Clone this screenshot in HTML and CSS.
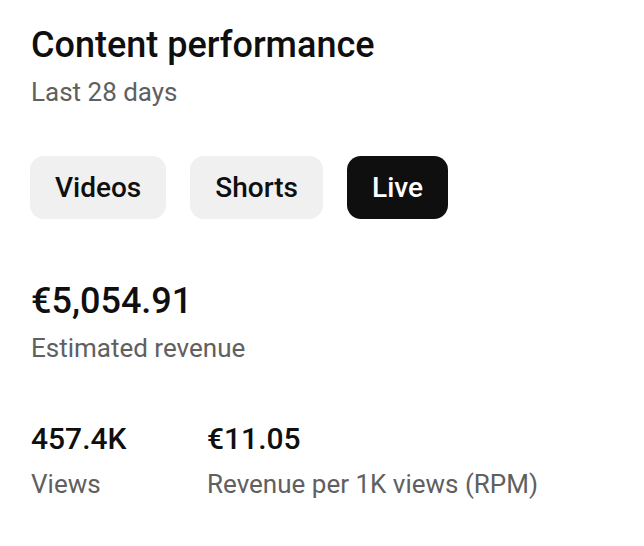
FILE: index.html
```html
<!DOCTYPE html>
<html lang="en">
<head>
  <meta charset="UTF-8">
  <meta name="viewport" content="width=device-width, initial-scale=1.0">
  <title>Content performance</title>
  <link rel="stylesheet" href="styles.css">
</head>
<body>
  <div class="panel">
    <h1 class="title">Content performance</h1>
    <div class="subtitle">Last 28 days</div>

    <div class="chips">
      <button class="chip">Videos</button>
      <button class="chip">Shorts</button>
      <button class="chip active">Live</button>
    </div>

    <div class="metric main">
      <div class="metric-value big">€5,054.91</div>
      <div class="metric-label">Estimated revenue</div>
    </div>

    <div class="metric-row">
      <div class="metric views">
        <div class="metric-value">457.4K</div>
        <div class="metric-label">Views</div>
      </div>
      <div class="metric">
        <div class="metric-value">€11.05</div>
        <div class="metric-label">Revenue per 1K views (RPM)</div>
      </div>
    </div>
  </div>
</body>
</html>
```

FILE: styles.css
```css
body {
  margin: 0;
  background: #ffffff;
  color: #0f0f0f;
  font-family: Roboto, "Noto Sans", sans-serif;
}

.panel {
  padding: 23px 31px 0 31px;
}

.title {
  margin: 0;
  font-size: 36px;
  font-weight: 500;
  line-height: 44px;
}

.subtitle {
  margin-top: 9px;
  font-size: 26px;
  line-height: 32px;
  color: #606060;
}

/* chip buttons */
.chips {
  display: flex;
  gap: 24px;
  margin-top: 48px;
  margin-left: -1px;
}

.chip {
  height: 63px;
  padding: 0 25px;
  border: none;
  border-radius: 14px;
  background: #f0f0f0;
  color: #0f0f0f;
  font-family: inherit;
  font-size: 28px;
  font-weight: 500;
}

.chip.active {
  background: #0f0f0f;
  color: #ffffff;
}

.metric-value {
  font-size: 30px;
  font-weight: 500;
  line-height: 36px;
}

.metric-value.big {
  font-size: 36px;
  line-height: 44px;
}

.metric-label {
  margin-top: 11px;
  font-size: 26px;
  line-height: 32px;
  color: #606060;
}

.main {
  margin-top: 60px;
}

.main .metric-label {
  margin-top: 9px;
}

.metric-row {
  display: flex;
  margin-top: 57px;
}

.views {
  width: 176px;
}
```
